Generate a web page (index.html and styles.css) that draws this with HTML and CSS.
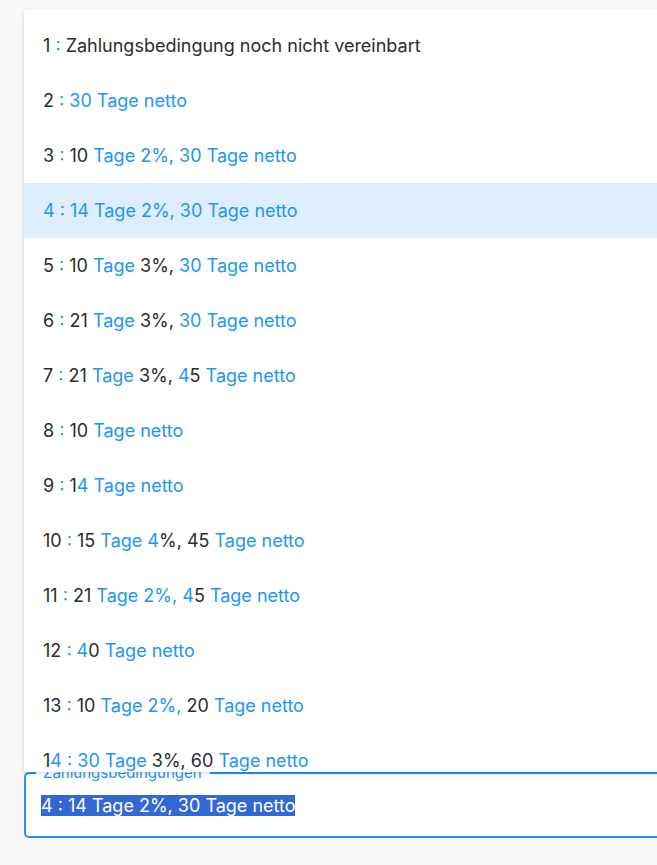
FILE: index.html
```html
<!DOCTYPE html>
<html lang="de">
<head>
    <meta charset="UTF-8">
    <meta name="viewport" content="width=device-width, initial-scale=1.0">
    <title>Zahlungsbedingungen</title>
    <link rel="stylesheet" href="styles.css">
</head>
<body>
    <div class="page">
        <div class="menu">
            <div class="item">1 <b>:</b> Zahlungsbedingung noch nicht vereinbart</div>
            <div class="item">2 <b>: 30 Tage netto</b></div>
            <div class="item">3 <b>:</b> 10 <b>Tage 2%, 30 Tage netto</b></div>
            <div class="item active"><b>4 : 14 Tage 2%, 30 Tage netto</b></div>
            <div class="item">5 <b>:</b> 10 <b>Tage</b> 3%, <b>30 Tage netto</b></div>
            <div class="item">6 <b>:</b> 21 <b>Tage</b> 3%, <b>30 Tage netto</b></div>
            <div class="item">7 <b>:</b> 21 <b>Tage</b> 3%, <b>4</b>5 <b>Tage netto</b></div>
            <div class="item">8 <b>:</b> 10 <b>Tage netto</b></div>
            <div class="item">9 <b>:</b> 1<b>4 Tage netto</b></div>
            <div class="item">10 <b>:</b> 15 <b>Tage 4</b>%, 45 <b>Tage netto</b></div>
            <div class="item">11 <b>:</b> 21 <b>Tage 2%, 4</b>5 <b>Tage netto</b></div>
            <div class="item">12 <b>: 4</b>0 <b>Tage netto</b></div>
            <div class="item">13 <b>:</b> 10 <b>Tage 2%,</b> 20 <b>Tage netto</b></div>
            <div class="item">1<b>4 : 30 Tage</b> 3%, 60 <b>Tage netto</b></div>
        </div>
        <div class="field">
            <label class="field-label">Zahlungsbedingungen</label>
            <div class="field-value"><span class="selected">4 : 14 Tage 2%, 30 Tage netto</span></div>
        </div>
    </div>
</body>
</html>
```

FILE: styles.css
```css
html, body {
    margin: 0;
    overflow: hidden;
}
body {
    font-family: 'Inter', 'Noto Sans', sans-serif;
    font-size: 18px;
    background-color: #f8f8f8;
    color: #2a2c30;
}
.page {
    width: 700px;
    padding: 9px 0 0 24px;
}
.menu {
    position: relative;
    z-index: 2;
    height: 763px;
    overflow: hidden;
    background-color: white;
    border-radius: 4px 0 0 4px;
    box-shadow: 0 2px 5px rgba(0, 0, 0, 0.12), 0 0 2px rgba(0, 0, 0, 0.08);
    padding-top: 9px;
    box-sizing: border-box;
}
.item {
    height: 55px;
    line-height: 55px;
    padding-left: 19px;
    white-space: nowrap;
}
.item b {
    font-weight: normal;
    color: #2196f3;
}
.item.active {
    background-color: #deeefc;
}
.field {
    position: relative;
    height: 66px;
    border: 2px solid #2196f3;
    border-right: none;
    border-radius: 5px 0 0 5px;
    box-sizing: border-box;
    background-color: white;
    display: flex;
    align-items: center;
    padding-left: 15px;
}
.field-label {
    position: absolute;
    top: -11px;
    left: 10px;
    padding: 0 8px 0 7px;
    background-color: white;
    color: #2196f3;
    font-size: 15px;
    line-height: 19px;
}
.field-value {
    padding-top: 1px;
}
.selected {
    background-color: #3367d6;
    color: white;
    line-height: 21px;
    display: inline-block;
}
```
